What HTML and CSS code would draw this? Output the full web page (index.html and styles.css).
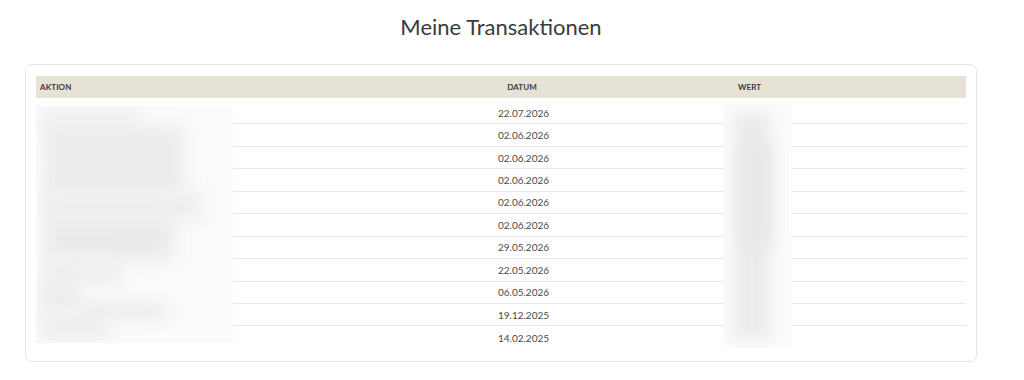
FILE: index.html
```html
<!DOCTYPE html>
<html lang="de">
<head>
<meta charset="utf-8">
<title>Meine Transaktionen</title>
<link rel="stylesheet" href="styles.css">
</head>
<body>
<div class="page">
  <h1 class="title">Meine Transaktionen</h1>
  <div class="card">
    <div class="table">
      <div class="thead">
        <div class="th th-action">AKTION</div>
        <div class="th th-date">DATUM</div>
        <div class="th th-value">WERT</div>
      </div>
      <div class="tbody">
        <div class="tr"><div class="td"></div><div class="td date">22.07.2026</div><div class="td"></div></div>
        <div class="tr"><div class="td"></div><div class="td date">02.06.2026</div><div class="td"></div></div>
        <div class="tr"><div class="td"></div><div class="td date">02.06.2026</div><div class="td"></div></div>
        <div class="tr"><div class="td"></div><div class="td date">02.06.2026</div><div class="td"></div></div>
        <div class="tr"><div class="td"></div><div class="td date">02.06.2026</div><div class="td"></div></div>
        <div class="tr"><div class="td"></div><div class="td date">02.06.2026</div><div class="td"></div></div>
        <div class="tr"><div class="td"></div><div class="td date">29.05.2026</div><div class="td"></div></div>
        <div class="tr"><div class="td"></div><div class="td date">22.05.2026</div><div class="td"></div></div>
        <div class="tr"><div class="td"></div><div class="td date">06.05.2026</div><div class="td"></div></div>
        <div class="tr"><div class="td"></div><div class="td date">19.12.2025</div><div class="td"></div></div>
        <div class="tr last"><div class="td"></div><div class="td date">14.02.2025</div><div class="td"></div></div>
      </div>
      <div class="blur blur-action">
        <span class="b b1"></span><span class="b b2"></span><span class="b b3"></span>
        <span class="b b4"></span><span class="b b5"></span><span class="b b6"></span>
        <span class="b b7"></span><span class="b b8"></span>
      </div>
      <div class="blur blur-value">
        <span class="b v1"></span><span class="b v2"></span>
      </div>
    </div>
  </div>
</div>
</body>
</html>
```

FILE: styles.css
```css
* { box-sizing: border-box; }
html, body { margin: 0; padding: 0; background: #fff; }
body {
  font-family: Lato, "Open Sans", "Liberation Sans", sans-serif;
  color: #444;
}
.page { width: 1002px; }
.title {
  margin: 0;
  padding-top: 12px;
  height: 64px;
  text-align: center;
  font-size: 22px;
  font-weight: 400;
  color: #3b3b3b;
  line-height: 30px;
}
.card {
  margin: 0 25px;
  border: 1px solid #e6e6e6;
  border-radius: 7px;
  padding: 11px 10px 12px 10px;
}
.table { position: relative; }
.thead, .tr {
  display: grid;
  grid-template-columns: 275px 422px 1fr;
}
.thead {
  background: #e6e2d6;
  height: 22px;
  align-items: center;
}
.th {
  font-size: 8px;
  font-weight: 700;
  color: #3a3a3a;
  letter-spacing: 0.1px;
}
.th-action { padding-left: 4px; }
.th-date { text-align: center; }
.th-value { padding-left: 5px; }
.tbody { padding-top: 4px; }
.tr {
  height: 22.44px;
  border-bottom: 1px solid #e8e8e8;
  align-items: center;
}
.tr.last { border-bottom: none; height: 23px; }
.td.date {
  text-align: center;
  font-size: 10px;
  padding-left: 3px;
  color: #4a4a4a;
}
.blur {
  position: absolute;
  overflow: hidden;
  background: #fbfbfb;
}
.blur-action { left: 0; top: 30px; width: 197px; height: 237px; }
.blur-value { left: 687px; top: 28px; width: 69px; height: 244px; background: #fcfcfc; }
.b {
  position: absolute;
  display: block;
  background: #ececec;
  filter: blur(8px);
}
.b1 { left: 4px; top: 2px; width: 100px; height: 26px; background: #f0f0f0; }
.b2 { left: 8px; top: 20px; width: 140px; height: 70px; background: #ececec; }
.b3 { left: 6px; top: 85px; width: 160px; height: 30px; background: #eeeeee; }
.b4 { left: 8px; top: 110px; width: 130px; height: 45px; background: #ebebeb; }
.b5 { left: 6px; top: 150px; width: 80px; height: 30px; background: #efefef; }
.b6 { left: 4px; top: 175px; width: 40px; height: 30px; background: #ececec; }
.b7 { left: 45px; top: 198px; width: 85px; height: 14px; background: #e8e8e8; }
.b8 { left: 4px; top: 205px; width: 70px; height: 30px; background: #eeeeee; }
.v1 { left: 10px; top: 8px; width: 38px; height: 228px; background: #ebebeb; }
.v2 { left: 22px; top: 40px; width: 26px; height: 100px; background: #e8e8e8; }
```
